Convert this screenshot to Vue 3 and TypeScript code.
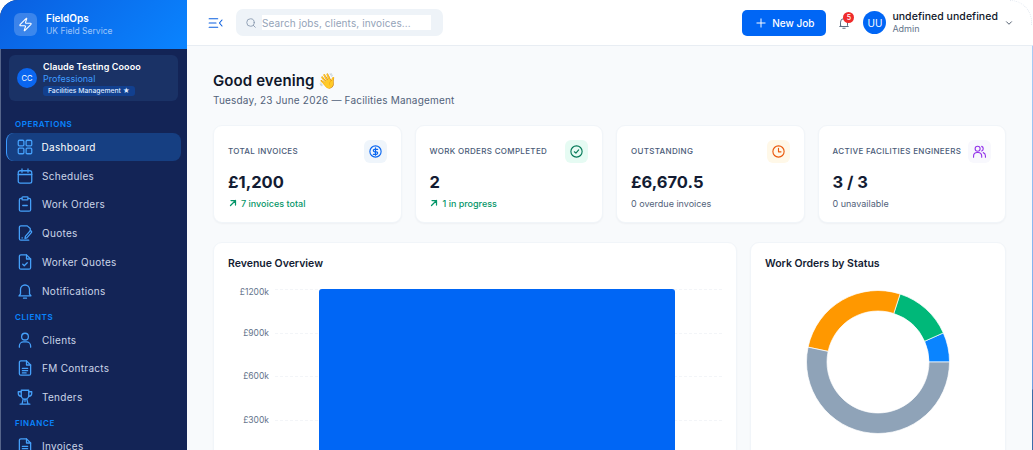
<template>
  <div class="shell">
    <aside class="sidebar">
      <div class="brand">
        <div class="brand-mark">
          <svg viewBox="0 0 24 24" class="ic-bolt"><path d="M4 14a1 1 0 0 1-.78-1.630l9.900-10.200a.5.5 0 0 1 .86.460l-1.920 6.020A1 1 0 0 0 13 10h7a1 1 0 0 1 .78 1.630l-9.900 10.200a.5.5 0 0 1-.86-.460l1.920-6.020A1 1 0 0 0 11 14z" /></svg>
        </div>
        <div>
          <div class="brand-name">FieldOps</div>
          <div class="brand-sub">UK Field Service</div>
        </div>
      </div>

      <div class="company">
        <div class="company-avatar">CC</div>
        <div class="company-text">
          <div class="company-name">Claude Testing Coooo</div>
          <div class="company-plan">Professional</div>
          <div class="company-tag">Facilities Management ★</div>
        </div>
      </div>

      <template v-for="group in navGroups" :key="group.title">
        <div class="nav-title">{{ group.title }}</div>
        <a
          v-for="item in group.items"
          :key="item.label"
          class="nav-item"
          :class="{ active: item.label === 'Dashboard' }"
        >
          <svg viewBox="0 0 24 24" class="nav-icon" v-html="item.icon"></svg>
          <span>{{ item.label }}</span>
        </a>
      </template>
    </aside>

    <div class="main">
      <header class="topbar">
        <svg viewBox="0 0 18 14" class="menu-toggle">
          <path d="M1 2h10M1 7h8M1 12h10" />
          <path d="M16 3.500 13 7l3 3.500" />
        </svg>
        <div class="search">
          <svg viewBox="0 0 24 24" class="search-icon"><circle cx="11" cy="11" r="7.500" /><path d="m20.500 20.500-4-4" /></svg>
          <input class="search-input" placeholder="Search jobs, clients, invoices..." />
        </div>
        <div class="top-right">
          <button class="new-job">
            <svg viewBox="0 0 24 24" class="plus"><path d="M12 5v14M5 12h14" /></svg>
            New Job
          </button>
          <div class="bell">
            <svg viewBox="0 0 24 24"><path d="M6 16.500V10.500a6 6 0 0 1 12 0v6l1.500 1.500h-15L6 16.500Z" /><path d="M10 21h4" /></svg>
            <span class="bell-count">5</span>
          </div>
          <div class="user-avatar">UU</div>
          <div class="user-text">
            <div class="user-name">undefined undefined</div>
            <div class="user-role">Admin</div>
          </div>
          <svg viewBox="0 0 24 24" class="chevron"><path d="m6 9 6 6 6-6" /></svg>
        </div>
      </header>

      <main class="content">
        <h1 class="greeting">Good evening <span class="wave">👋</span></h1>
        <p class="date">Tuesday, 23 June 2026 — Facilities Management</p>

        <section class="stats">
          <div v-for="card in stats" :key="card.label" class="stat-card">
            <div class="stat-head">
              <span class="stat-label">{{ card.label }}</span>
              <span class="stat-icon" :class="card.tone">
                <svg viewBox="0 0 24 24" v-html="card.icon"></svg>
              </span>
            </div>
            <div class="stat-value">{{ card.value }}</div>
            <div class="stat-note" :class="{ up: card.up }">
              <svg v-if="card.up" viewBox="0 0 24 24" class="arrow"><path d="M7 17 17 7M8 7h9v9" /></svg>
              {{ card.note }}
            </div>
          </div>
        </section>

        <section class="charts">
          <div class="chart-card">
            <h3 class="chart-title">Revenue Overview</h3>
            <div class="bar-chart">
              <div v-for="tick in ticks" :key="tick" class="tick">
                <span class="tick-label">{{ tick }}</span>
                <span class="tick-line"></span>
              </div>
              <div class="bar"></div>
            </div>
          </div>
          <div class="chart-card">
            <h3 class="chart-title">Work Orders by Status</h3>
            <svg viewBox="0 0 144 144" class="donut">
              <path v-for="slice in slices" :key="slice.color" :d="slice.d" :fill="slice.color" stroke="#fff" stroke-width="0.7" />
            </svg>
          </div>
        </section>
      </main>
    </div>
    <div class="edge"></div>
  </div>
</template>

<script setup lang="ts">
const icons = {
  grid: '<rect x="3" y="3" width="7.500" height="7.500" rx="1.500"/><rect x="13.500" y="3" width="7.500" height="7.500" rx="1.500"/><rect x="3" y="13.500" width="7.500" height="7.500" rx="1.500"/><rect x="13.500" y="13.500" width="7.500" height="7.500" rx="1.500"/>',
  calendar: '<rect x="3" y="5" width="18" height="16.500" rx="2.500"/><path d="M3 10h18M8 2.500V7M16 2.500V7"/>',
  clipboard: '<path d="M8 4.500H6.500A2 2 0 0 0 4.500 6.500v13a2 2 0 0 0 2 2h11a2 2 0 0 0 2-2v-13a2 2 0 0 0-2-2H16"/><rect x="8" y="2.500" width="8" height="4" rx="1"/><path d="M9 14h6"/>',
  quote: '<path d="M19 9V6l-4-3.500H6.500a2 2 0 0 0-2 2v15a2 2 0 0 0 2 2H17"/><path d="m20.500 11.500-6 7-2.500.5.500-2.500 6-7a1.400 1.400 0 0 1 2 2Z"/><path d="M8 18.500h.5"/>',
  fileCheck: '<path d="M14 2.500H6.500a2 2 0 0 0-2 2v15a2 2 0 0 0 2 2h11a2 2 0 0 0 2-2V8l-5.500-5.500Z"/><path d="M14 2.500V8h5.500M9 15l2 2 4-4"/>',
  bell: '<path d="M6 16V10a6 6 0 0 1 12 0v6l2 2.500H4L6 16Z"/><path d="M10 21.500h4"/>',
  user: '<circle cx="12" cy="7.500" r="4.500"/><path d="M4.500 21.500v-1.500a5.500 5.500 0 0 1 5.500-5.500h4a5.500 5.500 0 0 1 5.500 5.500v1.500"/>',
  fileText: '<path d="M14 2.500H6.500a2 2 0 0 0-2 2v15a2 2 0 0 0 2 2h11a2 2 0 0 0 2-2V8l-5.500-5.500Z"/><path d="M14 2.500V8h5.500M8.500 12.500h7M8.500 15.500h7M8.500 18.500h5"/>',
  trophy: '<path d="M7 3h10v7a5 5 0 0 1-10 0V3Z"/><path d="M7 5H3v2a4 4 0 0 0 4 4M17 5h4v2a4 4 0 0 1-4 4M12 15v3M9.500 15 8 21.500M14.500 15l1.500 6.500M5.500 21.500h13"/>',
  dollar: '<circle cx="12" cy="12" r="9"/><path d="M15.500 8.500h-5a2 2 0 0 0 0 4h3a2 2 0 0 1 0 4h-5M12 6v12"/>',
  check: '<circle cx="12" cy="12" r="9"/><path d="m8.500 12.500 2.500 2 4.500-5"/>',
  clock: '<circle cx="12" cy="12" r="9"/><path d="M12 7v5.500h4"/>',
  users: '<circle cx="9" cy="7.500" r="4"/><path d="M2.500 21v-2a5.500 5.500 0 0 1 5.500-5.500h2a5.500 5.500 0 0 1 5.500 5.500v2M15.500 3.800a4 4 0 0 1 0 7.400M18 13.800a5.500 5.500 0 0 1 3.500 5.200v2"/>'
}

const navGroups = [
  {
    title: 'OPERATIONS',
    items: [
      { label: 'Dashboard', icon: icons.grid },
      { label: 'Schedules', icon: icons.calendar },
      { label: 'Work Orders', icon: icons.clipboard },
      { label: 'Quotes', icon: icons.quote },
      { label: 'Worker Quotes', icon: icons.fileCheck },
      { label: 'Notifications', icon: icons.bell }
    ]
  },
  {
    title: 'CLIENTS',
    items: [
      { label: 'Clients', icon: icons.user },
      { label: 'FM Contracts', icon: icons.fileText },
      { label: 'Tenders', icon: icons.trophy }
    ]
  },
  {
    title: 'FINANCE',
    items: [{ label: 'Invoices', icon: icons.fileText }]
  }
]

const stats = [
  { label: 'TOTAL INVOICES', value: '£1,200', note: '7 invoices total', up: true, tone: 'blue', icon: icons.dollar },
  { label: 'WORK ORDERS COMPLETED', value: '2', note: '1 in progress', up: true, tone: 'green', icon: icons.check },
  { label: 'OUTSTANDING', value: '£6,670.5', note: '0 overdue invoices', up: false, tone: 'orange', icon: icons.clock },
  { label: 'ACTIVE FACILITIES ENGINEERS', value: '3 / 3', note: '0 unavailable', up: false, tone: 'purple', icon: icons.users }
]

const ticks = ['£1200k', '£900k', '£600k', '£300k']

// 15 work orders in total, drawn anticlockwise from 3 o'clock
const donutData = [
  { count: 1, color: '#0a84ff' },
  { count: 2, color: '#00b879' },
  { count: 4, color: '#ff9800' },
  { count: 8, color: '#8fa3b8' }
]

const arc = (start: number, end: number) => {
  const [cx, cy, outer, inner] = [72, 72, 71.5, 51]
  const pt = (r: number, a: number) => `${(cx + r * Math.cos(a)).toFixed(2)} ${(cy - r * Math.sin(a)).toFixed(2)}`
  const large = end - start > Math.PI ? 1 : 0
  return `M${pt(outer, start)}A${outer} ${outer} 0 ${large} 0 ${pt(outer, end)}L${pt(inner, end)}A${inner} ${inner} 0 ${large} 1 ${pt(inner, start)}Z`
}

let used = 0
const slices = donutData.map((s) => {
  const start = (used / 15) * Math.PI * 2
  used += s.count
  return { color: s.color, d: arc(start, (used / 15) * Math.PI * 2) }
})
</script>

<style>
html,
body {
  margin: 0;
  height: 100%;
  overflow: hidden;
  background: #fff;
}
</style>

<style scoped>
.shell {
  display: flex;
  height: 450px;
  overflow: hidden;
  font-family: Inter, "Noto Sans", sans-serif;
  background: #f8fafc;
  border-top-left-radius: 18px;
}

.sidebar {
  width: 187px;
  flex-shrink: 0;
  background: #132456;
  box-shadow: inset 1px 0 0 #56658a;
  overflow: hidden;
}

.brand {
  height: 49px;
  display: flex;
  align-items: center;
  gap: 9px;
  padding-left: 14px;
  background: linear-gradient(135deg, #0a5fe0, #0a84ff);
}

.brand-mark {
  width: 23px;
  height: 23px;
  border-radius: 6px;
  background: rgba(255, 255, 255, 0.2);
  display: flex;
  align-items: center;
  justify-content: center;
}

.ic-bolt {
  width: 15px;
  height: 15px;
  fill: none;
  stroke: #fff;
  stroke-width: 1.800;
  stroke-linejoin: round;
}

.brand-name {
  color: #fff;
  font-size: 10px;
  font-weight: 600;
  line-height: 13px;
}

.brand-sub {
  color: rgba(255, 255, 255, 0.6);
  font-size: 8.500px;
  line-height: 13px;
}

.company {
  margin: 6px 9px 0;
  height: 46px;
  box-sizing: border-box;
  border-radius: 6px;
  background: #1a3266;
  display: flex;
  align-items: center;
  gap: 6px;
  padding-left: 8px;
}

.company-avatar {
  width: 20px;
  height: 20px;
  border-radius: 50%;
  background: #0a66f0;
  color: #fff;
  font-size: 7.500px;
  display: flex;
  align-items: center;
  justify-content: center;
}

.company-name {
  color: #fff;
  font-size: 9px;
  font-weight: 600;
  line-height: 12px;
  letter-spacing: 0.100px;
}

.company-plan {
  color: #3d9bff;
  font-size: 9px;
  line-height: 12px;
}

.company-tag {
  margin-top: 1px;
  width: fit-content;
  padding: 0 5px;
  border-radius: 3px;
  background: #12408f;
  color: #dbe7ff;
  font-size: 6.800px;
  font-weight: 500;
  line-height: 10px;
}

.nav-title {
  color: #0a84ff;
  font-size: 8px;
  font-weight: 600;
  letter-spacing: 0.600px;
  padding-left: 15px;
  height: 14px;
  line-height: 14px;
  margin: 4.500px 0 1.500px;
}

.company + .nav-title {
  margin-top: 16px;
}

.nav-item {
  height: 28.800px;
  margin: 0 6px;
  display: flex;
  align-items: center;
  gap: 8px;
  padding-left: 10px;
  color: #cbd5e8;
  font-size: 10px;
  letter-spacing: 0.300px;
  box-sizing: border-box;
}

.nav-item.active {
  color: #fff;
  background: #163f82;
  border-radius: 8px;
  border-left: 1.500px solid #3d9bff;
  padding-left: 8.500px;
}

.nav-icon {
  width: 18px;
  height: 18px;
  fill: none;
  stroke: #45a0fa;
  stroke-width: 1.700;
  stroke-linecap: round;
  stroke-linejoin: round;
  flex-shrink: 0;
}

.main {
  flex: 1;
  min-width: 0;
  display: flex;
  flex-direction: column;
}

.edge {
  width: 1px;
  flex-shrink: 0;
  background: linear-gradient(#fff 45px, #a9ccf5 46px, #7fb0ee 300px, #6c9ee0 389px, #3b6ca8 390px);
}

.topbar {
  position: relative;
  height: 46px;
  flex-shrink: 0;
  box-sizing: border-box;
  background: #fff;
  border-bottom: 1px solid #e8edf3;
  display: flex;
  align-items: center;
  padding-left: 21px;
}

/* faint rounded corner of the bar, top right */
.topbar::after {
  content: "";
  position: absolute;
  top: 0;
  right: 0;
  width: 22px;
  height: 25px;
  box-sizing: border-box;
  border-top: 1px dotted #e2e8f0;
  border-right: 1px dotted #e2e8f0;
  border-top-right-radius: 22px;
}

.menu-toggle {
  width: 16px;
  height: 12px;
  fill: none;
  stroke: #0a5fe0;
  stroke-width: 1.300;
  stroke-linecap: round;
  stroke-linejoin: round;
}

.search {
  margin-left: 12px;
  width: 207px;
  height: 27px;
  border-radius: 7px;
  background: #eef3f8;
  display: flex;
  align-items: center;
  box-sizing: border-box;
  padding-left: 9px;
}

.search-icon {
  width: 12px;
  height: 12px;
  fill: none;
  stroke: #8a9bb0;
  stroke-width: 1.800;
  stroke-linecap: round;
  flex-shrink: 0;
}

.search-input {
  margin-left: 5px;
  width: 169px;
  height: 15px;
  box-sizing: border-box;
  border: 0;
  outline: 0;
  padding: 0;
  background: #fff;
  font-family: inherit;
  font-size: 10px;
  letter-spacing: 0.100px;
  color: #334155;
}

.search-input::placeholder {
  color: #94a3b8;
}

.top-right {
  margin-left: auto;
  display: flex;
  align-items: center;
  padding-right: 18px;
}

.new-job {
  width: 84px;
  height: 26px;
  border: 0;
  border-radius: 5px;
  background: #0066f5;
  color: #fff;
  font-family: inherit;
  font-size: 10px;
  font-weight: 500;
  display: flex;
  align-items: center;
  justify-content: center;
  gap: 4px;
  padding: 0;
}

.plus {
  width: 14px;
  height: 14px;
  fill: none;
  stroke: #fff;
  stroke-width: 1.700;
  stroke-linecap: round;
}

.bell {
  position: relative;
  width: 14px;
  height: 14px;
  margin-left: 11px;
}

.bell svg {
  width: 14px;
  height: 14px;
  fill: none;
  stroke: #5a6b80;
  stroke-width: 1.700;
  stroke-linecap: round;
  stroke-linejoin: round;
  display: block;
}

.bell-count {
  position: absolute;
  top: -4px;
  left: 6px;
  width: 11px;
  height: 11px;
  border-radius: 50%;
  background: #ef2b2b;
  color: #fff;
  font-size: 7px;
  font-weight: 500;
  line-height: 11px;
  text-align: center;
}

.user-avatar {
  margin-left: 12px;
  width: 23px;
  height: 23px;
  border-radius: 50%;
  background: #0066f5;
  color: #fff;
  font-size: 10px;
  display: flex;
  align-items: center;
  justify-content: center;
}

.user-text {
  margin-left: 6px;
}

.user-name {
  color: #0f172a;
  font-size: 10.500px;
  font-weight: 500;
  line-height: 13px;
  letter-spacing: 0.050px;
}

.user-role {
  color: #64748b;
  font-size: 9px;
  line-height: 12px;
}

.chevron {
  margin-left: 6px;
  width: 10px;
  height: 10px;
  fill: none;
  stroke: #334155;
  stroke-width: 2;
  stroke-linecap: round;
  stroke-linejoin: round;
}

.content {
  padding: 25px 26px 0;
}

.greeting {
  margin: 0;
  color: #0f172a;
  font-size: 15px;
  font-weight: 600;
  line-height: 19px;
  letter-spacing: 0.100px;
}

.wave {
  font-family: "Noto Color Emoji", sans-serif;
}

.date {
  margin: 2px 0 0;
  color: #52627a;
  font-size: 10px;
  line-height: 14px;
  letter-spacing: 0.200px;
}

.stats {
  margin-top: 18px;
  display: grid;
  grid-template-columns: repeat(4, 1fr);
  gap: 13px;
}

.stat-card {
  height: 98px;
  box-sizing: border-box;
  background: #fff;
  border: 1px solid #f1f5f9;
  border-radius: 9px;
  box-shadow: 0 1px 2px rgba(15, 23, 42, 0.04);
  padding: 14px 14px 0;
}

.stat-head {
  display: flex;
  align-items: center;
  justify-content: space-between;
  height: 23px;
}

.stat-label {
  margin-top: -2px;
  color: #4a5b78;
  font-size: 8px;
  font-weight: 500;
  letter-spacing: 0.320px;
  white-space: nowrap;
}

.stat-icon {
  width: 23px;
  height: 23px;
  border-radius: 6px;
  display: flex;
  align-items: center;
  justify-content: center;
  flex-shrink: 0;
}

.stat-icon svg {
  width: 15px;
  height: 15px;
  fill: none;
  stroke-width: 1.800;
  stroke-linecap: round;
  stroke-linejoin: round;
}

.blue {
  background: #eff5fb;
}
.blue svg {
  stroke: #0a66f0;
}
.green {
  background: #e6fbf3;
}
.green svg {
  stroke: #047857;
}
.orange {
  background: #fff8e8;
}
.orange svg {
  stroke: #ea580c;
}
.purple {
  background: #f8f8fd;
}
.purple svg {
  stroke: #9333ea;
}

.stat-value {
  margin-top: 7px;
  color: #131c33;
  font-size: 16.500px;
  font-weight: 700;
  line-height: 24px;
}

.stat-note {
  margin-top: 2.500px;
  color: #52627a;
  font-size: 9px;
  line-height: 13px;
  display: flex;
  align-items: center;
  gap: 2.500px;
}

.stat-note.up {
  color: #059669;
  font-weight: 500;
}

.arrow {
  width: 12px;
  height: 12px;
  margin-left: -1.500px;
  fill: none;
  stroke: #059669;
  stroke-width: 2.500;
  stroke-linecap: round;
  stroke-linejoin: round;
}

.charts {
  margin-top: 19px;
  display: grid;
  grid-template-columns: 524px 256px;
  gap: 13px;
}

.chart-card {
  height: 300px;
  box-sizing: border-box;
  background: #fff;
  border: 1px solid #f1f5f9;
  border-radius: 9px;
  box-shadow: 0 1px 2px rgba(15, 23, 42, 0.04);
  padding: 14px 14px 0;
}

.chart-title {
  margin: 0;
  color: #131c33;
  font-size: 10.500px;
  font-weight: 600;
  line-height: 14px;
}

.bar-chart {
  position: relative;
  margin-top: 18px;
}

.tick {
  height: 43.700px;
  display: flex;
  align-items: flex-start;
}

.tick-label {
  width: 41px;
  margin-top: -4px;
  text-align: right;
  color: #64748b;
  font-size: 8.500px;
  line-height: 8px;
}

.tick:first-child .tick-label {
  margin-top: -1px;
}

.tick-line {
  margin-left: 6px;
  flex: 1;
  border-top: 1px dashed #f3f5f8;
}

.bar {
  position: absolute;
  left: 91px;
  top: 0;
  width: 356px;
  height: 260px;
  background: #0066f5;
  border-radius: 3px 3px 0 0;
}

.donut {
  display: block;
  margin: 19px auto 0;
  width: 144px;
  height: 144px;
}
</style>
